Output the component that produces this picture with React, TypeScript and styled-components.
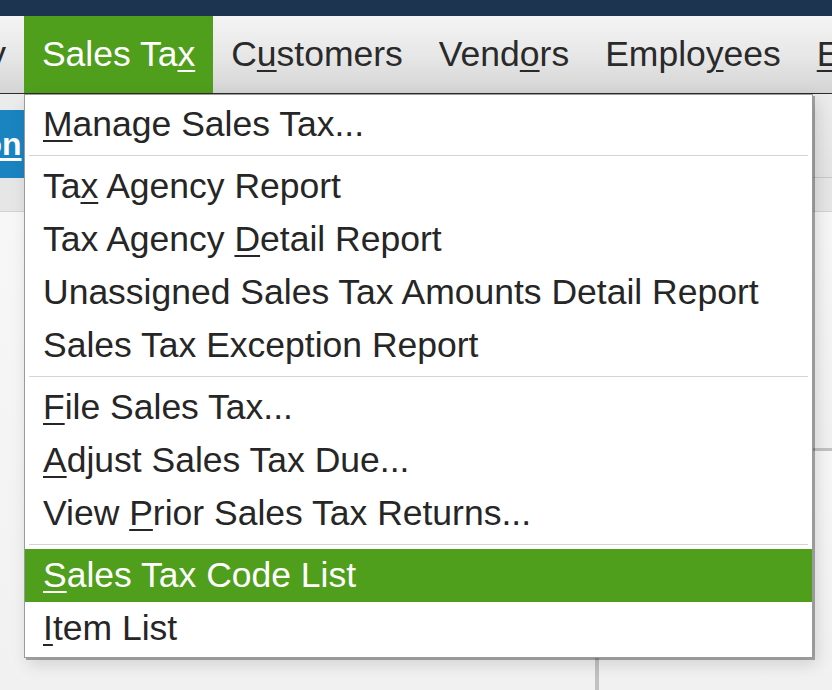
import styled, { createGlobalStyle } from "styled-components";

const GlobalStyle = createGlobalStyle`
  html, body {
    margin: 0;
    padding: 0;
    background: #f2f2f2;
    overflow: hidden;
  }
  * {
    box-sizing: border-box;
  }
`;

const Page = styled.div`
  position: relative;
  width: 832px;
  height: 690px;
  overflow: hidden;
  display: flex;
  flex-direction: column;
  font-family: "Liberation Sans", Arial, sans-serif;
  background: #f2f2f2;
`;

const TitleStrip = styled.div`
  height: 16px;
  flex: none;
  background: #1d3451;
`;

const MenuBar = styled.nav`
  height: 78px;
  flex: none;
  display: flex;
  margin-left: -164px;
  border-bottom: 1px solid #2b2b2b;
  background: linear-gradient(#f4f4f4, #e6e6e6 55%, #d4d4d4);
`;

const MenuTitle = styled.div<{ $active?: boolean }>`
  height: 77px;
  display: flex;
  align-items: center;
  padding: 0 18px;
  font-size: 35.5px;
  white-space: nowrap;
  color: ${({ $active }) => ($active ? "#ffffff" : "#2a2a2a")};
  background: ${({ $active }) => ($active ? "#4f9e1c" : "transparent")};
`;

const Key = styled.span`
  text-decoration: underline;
  text-decoration-thickness: 1.5px;
  text-underline-offset: 4px;
`;

const Toolbar = styled.div`
  height: 84px;
  flex: none;
  display: flex;
  align-items: flex-start;
  padding-top: 16px;
  border-bottom: 1px solid #c9c9c9;
  background: linear-gradient(#ececec, #e4e4e4);
`;

const ToolButton = styled.div`
  margin-left: -170px;
  width: 360px;
  height: 68px;
  display: flex;
  align-items: center;
  padding-left: 12px;
  background: #1a84c0;
  color: #ffffff;
  font-size: 32px;
  font-weight: bold;
  white-space: nowrap;
  text-decoration: underline;
  text-underline-offset: 3px;
`;

const TabStrip = styled.div`
  height: 34px;
  flex: none;
  border-bottom: 1px solid #d2d2d2;
  background: #e6e6e6;
`;

const Content = styled.div`
  flex: 1;
  display: grid;
  grid-template-columns: 595px 1fr;
  gap: 4px;
  background: #c2c2c2;
`;

const Column = styled.div`
  display: flex;
  flex-direction: column;
  gap: 3px;
`;

const Panel = styled.div<{ $h?: number }>`
  flex: ${({ $h }) => ($h ? "none" : "1")};
  height: ${({ $h }) => ($h ? `${$h}px` : "auto")};
  background: linear-gradient(#f7f7f7, #f1f1f1);
`;

const Dropdown = styled.div`
  position: absolute;
  left: 24px;
  top: 94px;
  width: 789px;
  padding: 3px 0 2px;
  background: #ffffff;
  border: 1px solid #9a9a9a;
  box-shadow: 2px 2px 0 rgba(0, 0, 0, 0.3), 4px 6px 16px rgba(0, 0, 0, 0.14);
`;

const Item = styled.div<{ $selected?: boolean }>`
  height: 53px;
  line-height: 53px;
  padding-left: 18px;
  font-size: 35.5px;
  white-space: nowrap;
  color: ${({ $selected }) => ($selected ? "#ffffff" : "#262626")};
  background: ${({ $selected }) => ($selected ? "#4f9e1c" : "transparent")};
`;

const Separator = styled.div`
  height: 1px;
  margin: 4px 4px;
  background: #d4d4d4;
`;

const App = () => {
  return (
    <Page>
      <GlobalStyle />
      <TitleStrip />
      <MenuBar>
        <MenuTitle>Company</MenuTitle>
        <MenuTitle $active>
          Sales Ta<Key>x</Key>
        </MenuTitle>
        <MenuTitle>
          C<Key>u</Key>stomers
        </MenuTitle>
        <MenuTitle>
          Vend<Key>o</Key>rs
        </MenuTitle>
        <MenuTitle>
          Emplo<Key>y</Key>ees
        </MenuTitle>
        <MenuTitle>
          <Key>E</Key>xtras
        </MenuTitle>
      </MenuBar>
      <Toolbar>
        <ToolButton>Transaction</ToolButton>
      </Toolbar>
      <TabStrip />
      <Content>
        <Panel />
        <Column>
          <Panel $h={236} />
          <Panel />
        </Column>
      </Content>

      <Dropdown>
        <Item>
          <Key>M</Key>anage Sales Tax...
        </Item>
        <Separator />
        <Item>
          Ta<Key>x</Key> Agency Report
        </Item>
        <Item>
          Tax Agency <Key>D</Key>etail Report
        </Item>
        <Item>Unassigned Sales Tax Amounts Detail Report</Item>
        <Item>Sales Tax Exception Report</Item>
        <Separator />
        <Item>
          <Key>F</Key>ile Sales Tax...
        </Item>
        <Item>
          <Key>A</Key>djust Sales Tax Due...
        </Item>
        <Item>
          View <Key>P</Key>rior Sales Tax Returns...
        </Item>
        <Separator />
        <Item $selected>
          <Key>S</Key>ales Tax Code List
        </Item>
        <Item>
          <Key>I</Key>tem List
        </Item>
      </Dropdown>
    </Page>
  );
};

export default App;
